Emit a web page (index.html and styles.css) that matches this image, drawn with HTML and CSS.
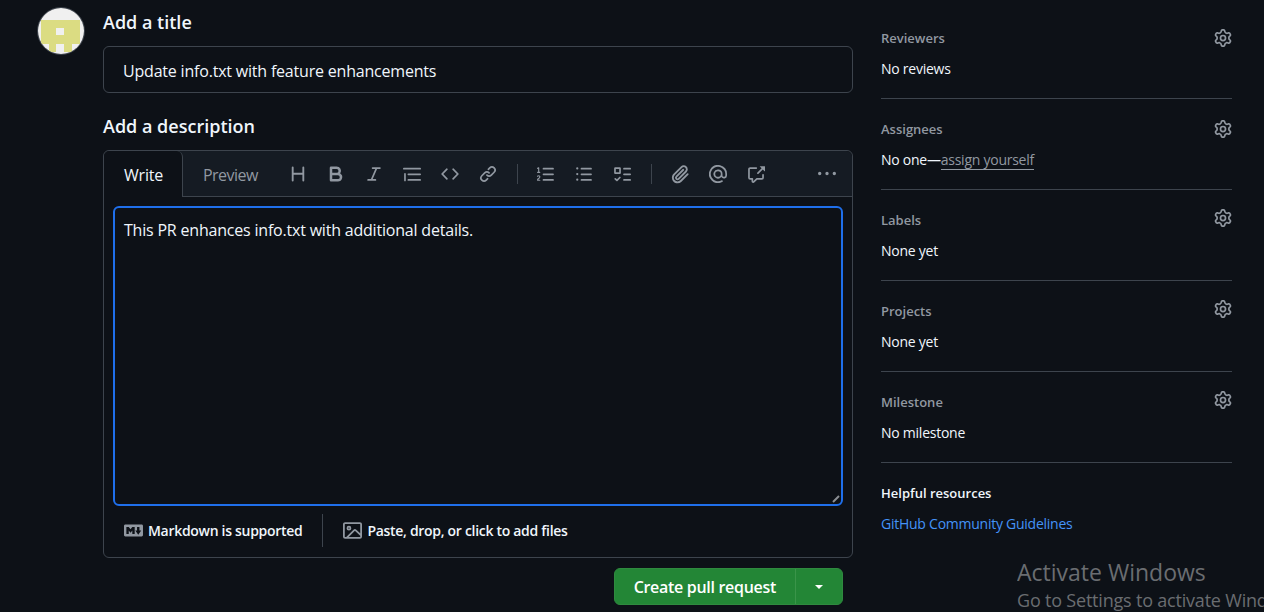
FILE: index.html
```html
<!DOCTYPE html>
<html lang="en">
<head>
  <meta charset="UTF-8">
  <title>Open a pull request</title>
  <link rel="stylesheet" href="styles.css">
</head>
<body>

  <svg class="defs" width="0" height="0">
    <symbol id="gear" viewBox="0 0 16 16"><path d="M8 0a8.2 8.2 0 0 1 .701.031C9.444.095 9.99.645 10.16 1.29l.288 1.107c.018.066.079.158.212.224.231.114.454.243.668.386.123.082.233.09.299.071l1.103-.303c.644-.176 1.392.021 1.82.63.27.385.506.792.704 1.218.315.675.111 1.422-.364 1.891l-.814.806c-.049.048-.098.147-.088.294.016.257.016.515 0 .772-.01.147.038.246.088.294l.814.806c.475.469.679 1.216.364 1.891a7.977 7.977 0 0 1-.704 1.217c-.428.61-1.176.807-1.82.63l-1.102-.302c-.067-.019-.177-.011-.3.071a5.909 5.909 0 0 1-.668.386c-.133.066-.194.158-.211.224l-.29 1.106c-.168.646-.715 1.196-1.458 1.26a8.006 8.006 0 0 1-1.402 0c-.743-.064-1.289-.614-1.458-1.26l-.289-1.106c-.018-.066-.079-.158-.212-.224a5.738 5.738 0 0 1-.668-.386c-.123-.082-.233-.09-.299-.071l-1.103.303c-.644.176-1.392-.021-1.82-.63a8.12 8.12 0 0 1-.704-1.218c-.315-.675-.111-1.422.363-1.891l.815-.806c.05-.048.098-.147.088-.294a6.214 6.214 0 0 1 0-.772c.01-.147-.038-.246-.088-.294l-.815-.806C.635 6.045.431 5.298.746 4.623a7.92 7.92 0 0 1 .704-1.217c.428-.61 1.176-.807 1.82-.63l1.102.302c.067.019.177.011.3-.071.214-.143.437-.272.668-.386.133-.066.194-.158.211-.224l.29-1.106C6.009.645 6.556.095 7.299.03 7.53.01 7.764 0 8 0Zm-.571 1.525c-.036.003-.108.036-.137.146l-.289 1.105c-.147.561-.549.967-.998 1.189-.173.086-.34.183-.5.29-.417.278-.97.423-1.529.27l-1.103-.303c-.109-.03-.175.016-.195.045-.22.312-.412.644-.573.99-.014.031-.021.11.059.19l.815.806c.411.406.562.957.53 1.456a4.709 4.709 0 0 0 0 .582c.032.499-.119 1.05-.53 1.456l-.815.806c-.081.08-.073.159-.059.19.162.346.353.677.573.989.02.03.085.076.195.046l1.102-.303c.56-.153 1.113-.008 1.53.27.161.107.328.204.501.29.447.222.85.629.997 1.189l.289 1.105c.029.109.101.143.137.146a6.6 6.6 0 0 0 1.142 0c.036-.003.108-.036.137-.146l.289-1.105c.147-.561.549-.967.998-1.189.173-.086.34-.183.5-.29.417-.278.97-.423 1.529-.27l1.103.303c.109.029.175-.016.195-.045.22-.313.411-.644.573-.99.014-.031.021-.11-.059-.19l-.815-.806c-.411-.406-.562-.957-.53-1.456a4.709 4.709 0 0 0 0-.582c-.032-.499.119-1.05.53-1.456l.815-.806c.081-.08.073-.159.059-.19a6.464 6.464 0 0 0-.573-.989c-.02-.03-.085-.076-.195-.046l-1.102.303c-.56.153-1.113.008-1.53-.27a4.44 4.44 0 0 0-.501-.29c-.447-.222-.85-.629-.997-1.189l-.289-1.105c-.029-.11-.101-.143-.137-.146a6.6 6.6 0 0 0-1.142 0ZM11 8a3 3 0 1 1-6 0 3 3 0 0 1 6 0ZM9.5 8a1.5 1.5 0 1 0-3.001.001A1.5 1.5 0 0 0 9.5 8Z"/></symbol>
  </svg>

  <div class="page">
    <div class="avatar">
      <svg viewBox="0 0 46 46" width="46" height="46">
        <rect width="46" height="46" fill="#f0f0f0"/>
        <path fill="#dbdc82" d="M3 12h39v24h-8v8h-8v-8h-8v8h-7v-8H3z"/>
        <rect x="18" y="20" width="8" height="7" fill="#f0f0f0"/>
      </svg>
    </div>

    <main class="main">
      <h2 class="field-label">Add a title</h2>
      <div class="title-input">Update info.txt with feature enhancements</div>

      <h2 class="field-label desc-label">Add a description</h2>
      <div class="editor">
        <div class="editor-head">
          <div class="tab tab-active">Write</div>
          <div class="tab">Preview</div>
          <div class="toolbar">
            <div class="tool-group">
              <svg class="icon icon-big" viewBox="0 0 16 16"><path d="M3.75 2a.75.75 0 0 1 .75.75V7h7V2.75a.75.75 0 0 1 1.5 0v10.5a.75.75 0 0 1-1.5 0V8.5h-7v4.75a.75.75 0 0 1-1.5 0V2.75A.75.75 0 0 1 3.75 2Z"/></svg>
              <svg class="icon icon-big" viewBox="0 0 16 16"><path d="M4 2h4.5a3.501 3.501 0 0 1 2.852 5.53A3.499 3.499 0 0 1 9.5 14H4a1 1 0 0 1-1-1V3a1 1 0 0 1 1-1Zm1 7v3h4.5a1.5 1.5 0 0 0 0-3Zm3.5-2a1.5 1.5 0 0 0 0-3H5v3Z"/></svg>
              <svg class="icon" viewBox="0 0 16 16"><path d="M6 2.75A.75.75 0 0 1 6.75 2h6.5a.75.75 0 0 1 0 1.5h-2.505l-3.858 9H9.25a.75.75 0 0 1 0 1.5h-6.5a.75.75 0 0 1 0-1.5h2.505l3.858-9H6.75A.75.75 0 0 1 6 2.75Z"/></svg>
              <svg class="icon" viewBox="0 0 16 16"><path d="M.75 2.5h14.5a.75.75 0 0 1 0 1.5H.75a.75.75 0 0 1 0-1.5Zm4 5h10.5a.75.75 0 0 1 0 1.5H4.75a.75.75 0 0 1 0-1.5Zm0 5h10.5a.75.75 0 0 1 0 1.5H4.75a.75.75 0 0 1 0-1.5ZM2.5 7.75v6a.75.75 0 0 1-1.5 0v-6a.75.75 0 0 1 1.5 0Z"/></svg>
              <svg class="icon" viewBox="0 0 16 16"><path d="m11.28 3.22 4.25 4.25a.75.75 0 0 1 0 1.06l-4.25 4.25a.749.749 0 0 1-1.275-.326.749.749 0 0 1 .215-.734L13.94 8l-3.72-3.72a.749.749 0 0 1 .326-1.275.749.749 0 0 1 .734.215Zm-6.56 0a.751.751 0 0 1 1.042.018.751.751 0 0 1 .018 1.042L2.06 8l3.72 3.72a.749.749 0 0 1-.326 1.275.749.749 0 0 1-.734-.215L.47 8.53a.75.75 0 0 1 0-1.06Z"/></svg>
              <svg class="icon" viewBox="0 0 16 16"><path d="m7.775 3.275 1.25-1.25a3.5 3.5 0 1 1 4.95 4.95l-2.5 2.5a3.5 3.5 0 0 1-4.95 0 .751.751 0 0 1 .018-1.042.751.751 0 0 1 1.042-.018 1.998 1.998 0 0 0 2.83 0l2.5-2.5a2.002 2.002 0 0 0-2.83-2.83l-1.25 1.25a.751.751 0 0 1-1.042-.018.751.751 0 0 1-.018-1.042Zm-4.69 9.64a1.998 1.998 0 0 0 2.83 0l1.25-1.25a.751.751 0 0 1 1.042.018.751.751 0 0 1 .018 1.042l-1.25 1.25a3.5 3.5 0 1 1-4.95-4.95l2.5-2.5a3.5 3.5 0 0 1 4.95 0 .751.751 0 0 1-.018 1.042.751.751 0 0 1-1.042.018 1.998 1.998 0 0 0-2.83 0l-2.5 2.5a1.998 1.998 0 0 0 0 2.83Z"/></svg>
            </div>
            <div class="tool-sep"></div>
            <div class="tool-group">
              <svg class="icon" viewBox="0 0 16 16"><path d="M5 3.25a.75.75 0 0 1 .75-.75h8.5a.75.75 0 0 1 0 1.5h-8.5A.75.75 0 0 1 5 3.25Zm0 5a.75.75 0 0 1 .75-.75h8.5a.75.75 0 0 1 0 1.5h-8.5A.75.75 0 0 1 5 8.25Zm0 5a.75.75 0 0 1 .75-.75h8.5a.75.75 0 0 1 0 1.5h-8.5a.75.75 0 0 1-.75-.75ZM.924 10.32a.5.5 0 0 1-.851-.525l.001-.001.001-.002.002-.004.007-.011c.097-.144.215-.273.348-.384.228-.19.588-.392 1.068-.392.468 0 .858.181 1.126.484.259.294.377.673.377 1.038 0 .987-.686 1.495-1.156 1.845l-.047.035c-.303.225-.522.4-.654.597h1.357a.5.5 0 0 1 0 1H.5a.5.5 0 0 1-.5-.5c0-1.005.692-1.52 1.167-1.875l.035-.025c.531-.396.8-.625.8-1.078a.57.57 0 0 0-.128-.376C1.806 10.068 1.695 10 1.5 10a.658.658 0 0 0-.429.163.835.835 0 0 0-.144.153ZM2.003 2.5V6h.503a.5.5 0 0 1 0 1H.5a.5.5 0 0 1 0-1h.503V3.308l-.28.14a.5.5 0 0 1-.446-.895l1.003-.5a.5.5 0 0 1 .723.447Z"/></svg>
              <svg class="icon" viewBox="0 0 16 16"><path d="M5.75 2.5h8.5a.75.75 0 0 1 0 1.5h-8.5a.75.75 0 0 1 0-1.5Zm0 5h8.5a.75.75 0 0 1 0 1.5h-8.5a.75.75 0 0 1 0-1.5Zm0 5h8.5a.75.75 0 0 1 0 1.5h-8.5a.75.75 0 0 1 0-1.5ZM2 14a1 1 0 1 1 0-2 1 1 0 0 1 0 2Zm1-6a1 1 0 1 1-2 0 1 1 0 0 1 2 0ZM2 4a1 1 0 1 1 0-2 1 1 0 0 1 0 2Z"/></svg>
              <svg class="icon" viewBox="0 0 16 16"><path d="M2 2h4a1 1 0 0 1 1 1v4a1 1 0 0 1-1 1H2a1 1 0 0 1-1-1V3a1 1 0 0 1 1-1Zm4.655 8.595a.75.75 0 0 1 0 1.06L4.03 14.28a.75.75 0 0 1-1.06 0l-1.5-1.5a.749.749 0 0 1 .326-1.275.749.749 0 0 1 .734.215l.97.97 2.095-2.095a.75.75 0 0 1 1.06 0ZM9.75 2.5h5.5a.75.75 0 0 1 0 1.5h-5.5a.75.75 0 0 1 0-1.5Zm0 5h5.5a.75.75 0 0 1 0 1.5h-5.5a.75.75 0 0 1 0-1.5Zm0 5h5.5a.75.75 0 0 1 0 1.5h-5.5a.75.75 0 0 1 0-1.5Zm-7.25-9v3h3v-3Z"/></svg>
            </div>
            <div class="tool-sep"></div>
            <div class="tool-group">
              <svg class="icon icon-big" viewBox="0 0 16 16"><path d="M12.212 3.02a1.753 1.753 0 0 0-2.478.003l-5.83 5.83a3.007 3.007 0 0 0-.88 2.127c0 .795.315 1.551.88 2.116.567.567 1.333.89 2.126.89.79 0 1.548-.321 2.116-.89l5.48-5.48a.75.75 0 0 1 1.061 1.06l-5.48 5.48a4.492 4.492 0 0 1-3.177 1.33c-1.2 0-2.345-.487-3.187-1.33a4.483 4.483 0 0 1-1.32-3.177c0-1.195.475-2.341 1.32-3.186l5.83-5.83a3.25 3.25 0 0 1 5.553 2.297c0 .863-.343 1.691-.953 2.301L7.439 12.39c-.375.377-.884.59-1.416.593a1.998 1.998 0 0 1-1.412-.593 1.992 1.992 0 0 1 0-2.828l5.48-5.48a.751.751 0 0 1 1.042.018.751.751 0 0 1 .018 1.042l-5.48 5.48a.492.492 0 0 0 0 .707.499.499 0 0 0 .71 0l5.83-5.83a1.75 1.75 0 0 0 0-2.479Z"/></svg>
              <svg class="icon" viewBox="0 0 16 16"><path d="M4.75 2.37a6.501 6.501 0 0 0 6.5 11.26.75.75 0 0 1 .75 1.298A7.999 7.999 0 0 1 .989 4.148 8 8 0 0 1 16 7.75v1.5a2.75 2.75 0 0 1-5.072 1.475 3.999 3.999 0 0 1-6.65-4.19A4 4 0 0 1 12 8v1.25a1.25 1.25 0 0 0 2.5 0V7.867a6.5 6.5 0 0 0-9.75-5.496ZM10.5 8a2.5 2.5 0 1 0-5 0 2.5 2.5 0 0 0 5 0Z"/></svg>
              <svg class="icon" viewBox="0 0 16 16"><path d="M2.75 3.5a.25.25 0 0 0-.25.25v7.5c0 .138.112.25.25.25h2a.75.75 0 0 1 .75.75v2.19l2.72-2.72a.749.749 0 0 1 .53-.22h4.5a.25.25 0 0 0 .25-.25v-2.5a.75.75 0 0 1 1.5 0v2.5A1.75 1.75 0 0 1 13.25 13H9.06l-2.573 2.573A1.458 1.458 0 0 1 4 14.543V13H2.75A1.75 1.75 0 0 1 1 11.25v-7.5C1 2.784 1.784 2 2.75 2h5.5a.75.75 0 0 1 0 1.5ZM16 1.25v4.146a.25.25 0 0 1-.427.177L14.03 4.03l-3.75 3.75a.749.749 0 0 1-1.275-.326.749.749 0 0 1 .215-.734l3.75-3.75-1.543-1.543A.25.25 0 0 1 11.604 1h4.146a.25.25 0 0 1 .25.25Z"/></svg>
            </div>
            <svg class="icon kebab" viewBox="0 0 16 16"><path d="M8 9a1.5 1.5 0 1 0 0-3 1.5 1.5 0 0 0 0 3ZM1.5 9a1.5 1.5 0 1 0 0-3 1.5 1.5 0 0 0 0 3Zm13 0a1.5 1.5 0 1 0 0-3 1.5 1.5 0 0 0 0 3Z"/></svg>
          </div>
        </div>

        <div class="editor-body">
          <div class="textarea">
            This PR enhances info.txt with additional details.
            <svg class="resize-grip" viewBox="0 0 8 8" width="8" height="8"><path d="M7 1 1 7"/></svg>
          </div>
        </div>

        <div class="editor-foot">
          <div class="foot-item foot-md">
            <svg class="foot-icon" viewBox="0 0 16 16"><path d="M14.85 3c.63 0 1.15.52 1.14 1.15v7.7c0 .63-.51 1.15-1.15 1.15H1.15C.52 13 0 12.48 0 11.84V4.15C0 3.52.52 3 1.15 3ZM9 11V5H7L5.5 7 4 5H2v6h2V8l1.5 1.92L7 8v3Zm2.99.5L14.5 8H13V5h-2v3H9.5Z"/></svg>
            Markdown is supported
          </div>
          <div class="foot-item foot-files">
            <svg class="foot-icon" viewBox="0 0 16 16"><path d="M16 13.25A1.75 1.75 0 0 1 14.25 15H1.75A1.75 1.75 0 0 1 0 13.25V2.75C0 1.784.784 1 1.75 1h12.5c.966 0 1.75.784 1.75 1.75ZM1.75 2.5a.25.25 0 0 0-.25.25v10.5c0 .138.112.25.25.25h.94l.03-.03 6.077-6.078a1.75 1.75 0 0 1 2.412-.06L14.5 10.31V2.75a.25.25 0 0 0-.25-.25Zm12.5 11a.25.25 0 0 0 .25-.25v-.917l-4.298-3.889a.25.25 0 0 0-.344.009L4.81 13.5ZM7 6a2 2 0 1 1-3.999.001A2 2 0 0 1 7 6ZM5.5 6a.5.5 0 1 0-1 0 .5.5 0 0 0 1 0Z"/></svg>
            Paste, drop, or click to add files
          </div>
        </div>
      </div>

      <div class="actions">
        <div class="split-btn">
          <div class="btn-main">Create pull request</div>
          <div class="btn-caret"><span class="caret"></span></div>
        </div>
      </div>
    </main>

    <aside class="sidebar">
      <section class="side-item">
        <div class="side-head">Reviewers <svg class="gear"><use href="#gear"/></svg></div>
        <div class="side-value">No reviews</div>
      </section>
      <section class="side-item">
        <div class="side-head">Assignees <svg class="gear"><use href="#gear"/></svg></div>
        <div class="side-value">No one—<span class="assign">assign yourself</span></div>
      </section>
      <section class="side-item">
        <div class="side-head">Labels <svg class="gear gear-up"><use href="#gear"/></svg></div>
        <div class="side-value">None yet</div>
      </section>
      <section class="side-item">
        <div class="side-head">Projects <svg class="gear gear-up"><use href="#gear"/></svg></div>
        <div class="side-value">None yet</div>
      </section>
      <section class="side-item">
        <div class="side-head">Milestone <svg class="gear gear-up"><use href="#gear"/></svg></div>
        <div class="side-value">No milestone</div>
      </section>
      <section class="side-help">
        <div class="help-title">Helpful resources</div>
        <div class="help-link">GitHub Community Guidelines</div>
      </section>
    </aside>
  </div>

  <div class="watermark">
    <div class="wm-title">Activate Windows</div>
    <div class="wm-sub">Go to Settings to activate Windows.</div>
  </div>

</body>
</html>
```

FILE: styles.css
```css
html, body {
  height: 612px;
  overflow: hidden;
}

body {
  margin: 0;
  background-color: #0d1117;
  color: #f0f6fc;
  font-family: "Open Sans", "Noto Sans", sans-serif;
  font-size: 14px;
  position: relative;
}

.defs {
  position: absolute;
}

.page {
  display: flex;
  align-items: flex-start;
  padding: 7px 32px 0 37px;
}

.avatar {
  width: 46px;
  height: 46px;
  border: 1px solid #3d444d;
  border-radius: 50%;
  overflow: hidden;
  margin-right: 18px;
  flex-shrink: 0;
}

.avatar svg {
  display: block;
}

.main {
  width: 750px;
  flex-shrink: 0;
}

.field-label {
  margin: 0;
  font-size: 18px;
  line-height: 30px;
  font-weight: 600;
}

.title-input {
  margin-top: 9px;
  height: 45px;
  line-height: 49px;
  padding-left: 19px;
  border: 1px solid #3d444d;
  border-radius: 6px;
  font-size: 16px;
  letter-spacing: -0.2px;
}

.desc-label {
  margin-top: 18px;
}

.editor {
  margin-top: 9px;
  height: 406px;
  border: 1px solid #3d444d;
  border-radius: 6px;
  display: flex;
  flex-direction: column;
}

.editor-head {
  display: flex;
  height: 46px;
  background-color: #151b23;
  border-bottom: 1px solid #3d444d;
  border-radius: 6px 6px 0 0;
  box-sizing: border-box;
}

.tab {
  padding: 0 19px 0 20px;
  line-height: 48px;
  font-size: 16px;
  letter-spacing: -0.55px;
  color: #9198a1;
}

.tab-active {
  height: 46px;
  box-sizing: border-box;
  background-color: #0d1117;
  color: #f0f6fc;
  border-right: 1px solid #3d444d;
  border-radius: 6px 6px 0 0;
  letter-spacing: -0.2px;
}

.toolbar {
  display: flex;
  align-items: center;
  flex: 1;
  padding: 0 15px 0 12px;
}

.tool-group {
  display: flex;
  align-items: center;
  gap: 20px;
}

.tool-sep {
  width: 1px;
  height: 20px;
  margin: 0 19px 0 20px;
  background-color: #3d444d;
}

.icon {
  width: 18px;
  height: 18px;
  fill: #9198a1;
  display: block;
}

/* these glyphs sit tighter in their box, so they run larger to read the same */
.icon-big {
  width: 20px;
  height: 20px;
  margin: 0 -1px;
}

.kebab {
  margin-left: auto;
  width: 20px;
}

.editor-body {
  flex: 1;
  padding: 9px 9px 0;
  display: flex;
}

.textarea {
  flex: 1;
  position: relative;
  border: 2px solid #1f6feb;
  border-radius: 6px;
  padding: 10px 9px 9px;
  font-size: 16px;
  line-height: 24px;
  letter-spacing: -0.2px;
}

.resize-grip {
  position: absolute;
  right: 1px;
  bottom: 1px;
  stroke: #8b8f94;
  stroke-width: 2;
  fill: none;
}

.editor-foot {
  height: 49px;
  padding-bottom: 2px;
  display: flex;
  align-items: center;
  padding-left: 20px;
  font-size: 14px;
  font-weight: 600;
  letter-spacing: -0.3px;
}

.foot-item {
  display: flex;
  align-items: center;
}

.foot-md {
  height: 33px;
  padding-right: 20px;
  border-right: 1px solid #3d444d;
}

.foot-files {
  padding-left: 20px;
}

.foot-icon {
  width: 19px;
  height: 19px;
  fill: #9198a1;
  margin-right: 5px;
}

.actions {
  display: flex;
  justify-content: flex-end;
  margin: 10px 10px 0 0;
}

.split-btn {
  display: flex;
  height: 35px;
  border: 1px solid #2f8a3f;
  border-radius: 6px;
  background-color: #238636;
  color: #fff;
  font-size: 16px;
  font-weight: 600;
  letter-spacing: -0.3px;
  line-height: 37px;
}

.btn-main {
  padding: 0 19px;
  border-right: 1px solid #3a9449;
}

.btn-caret {
  width: 46px;
  display: flex;
  align-items: center;
  justify-content: center;
}

.caret {
  border: 4px solid transparent;
  border-top-color: #fff;
  border-bottom: 0;
}

.sidebar {
  width: 351px;
  margin-left: 28px;
  flex-shrink: 0;
}

.side-item {
  height: 91px;
  box-sizing: border-box;
  border-bottom: 1px solid #3d444d;
  padding-top: 21px;
}

.side-item:first-child {
  height: 92px;
  padding-top: 22px;
}

.side-head {
  display: flex;
  justify-content: space-between;
  align-items: center;
  height: 18px;
  font-size: 13px;
  font-weight: 600;
  color: #9198a1;
}

.gear {
  width: 18px;
  height: 18px;
  fill: #9198a1;
}

.gear-up {
  margin-bottom: 4px;
}

.side-value {
  margin-top: 12px;
  line-height: 20px;
  font-size: 14px;
  letter-spacing: -0.25px;
}

.assign {
  color: #9198a1;
  border-bottom: 1px solid #9198a1;
}

.side-help {
  padding-top: 20px;
}

.help-title {
  font-size: 13px;
  line-height: 20px;
  font-weight: 600;
}

.help-link {
  margin-top: 11px;
  line-height: 20px;
  color: #4493f8;
  letter-spacing: -0.25px;
}

/* windows activation notice sits over the page */
.watermark {
  position: absolute;
  left: 1017px;
  top: 556px;
  width: 247px;
  overflow: hidden;
  white-space: nowrap;
  color: #6a6d71;
}

.wm-title {
  font-size: 23px;
  line-height: 32px;
}

.wm-sub {
  font-size: 18px;
  line-height: 24px;
  letter-spacing: -0.2px;
}
```
